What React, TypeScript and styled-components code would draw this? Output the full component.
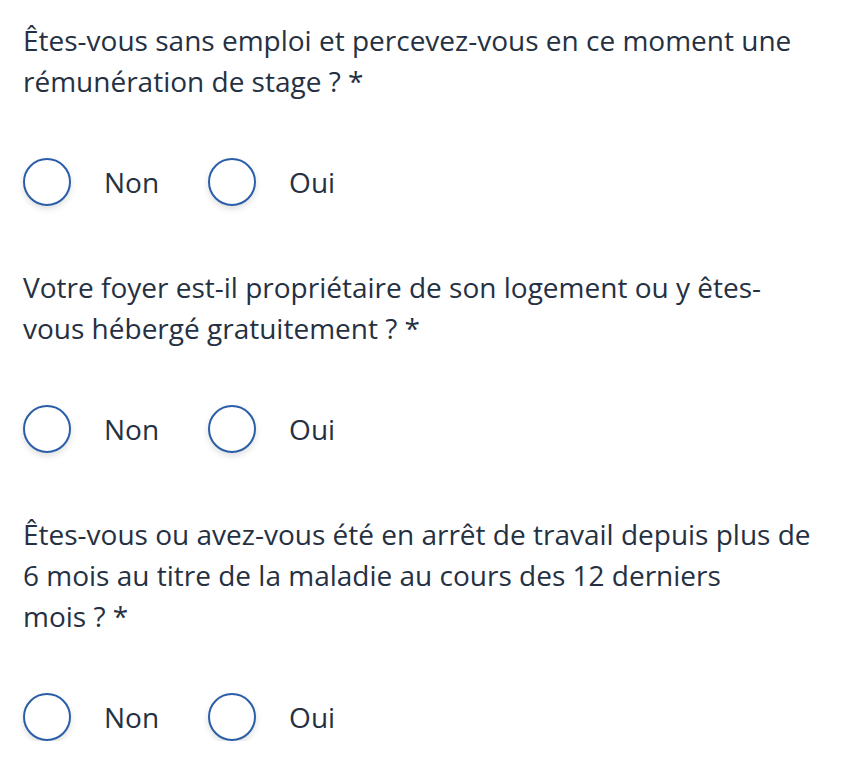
import React from "react";
import styled, { createGlobalStyle } from "styled-components";

const GlobalStyle = createGlobalStyle`
    body {
        margin: 0;
        background: #ffffff;
        font-family: "Open Sans", "Noto Sans", sans-serif;
        color: #253142;
    }
`;

const Page = styled.div`
    padding: 20px 23px 0 23px;
    width: 792px;
`;

const Question = styled.fieldset`
    border: 0;
    margin: 0 0 61px 0;
    padding: 0;

    &:last-child {
        margin-bottom: 0;
    }
`;

const Label = styled.div`
    font-size: 28px;
    line-height: 41px;
`;

const Options = styled.div`
    display: flex;
    align-items: center;
    gap: 49px;
    margin-top: 56px;
`;

const Option = styled.label`
    display: flex;
    align-items: center;
    gap: 33px;
    cursor: pointer;
    font-size: 28px;
`;

const Circle = styled.span`
    display: block;
    width: 44px;
    height: 44px;
    border-radius: 50%;
    border: 2px solid #2a5ea8;
    background: #ffffff;
    box-shadow: 0 3px 6px rgba(0, 0, 0, 0.13);
`;

interface Props {
    text: string;
    name: string;
}

const RadioQuestion: React.FC<Props> = ({ text, name }) => {
    return (
        <Question>
            <Label>{text}</Label>
            <Options>
                <Option>
                    <Circle />
                    Non
                </Option>
                <Option>
                    <Circle />
                    Oui
                </Option>
            </Options>
        </Question>
    );
};

const questions = [
    { name: "stage", text: "Êtes-vous sans emploi et percevez-vous en ce moment une rémunération de stage\u00a0?\u00a0*" },
    { name: "logement", text: "Votre foyer est-il propriétaire de son logement ou y êtes-vous hébergé gratuitement\u00a0?\u00a0*" },
    { name: "arret", text: "Êtes-vous ou avez-vous été en arrêt de travail depuis plus de 6 mois au titre de la maladie au cours des 12 derniers mois\u00a0?\u00a0*" },
];

export default function App() {
    return (
        <Page>
            <GlobalStyle />
            {questions.map((q) => (
                <RadioQuestion key={q.name} name={q.name} text={q.text} />
            ))}
        </Page>
    );
}
